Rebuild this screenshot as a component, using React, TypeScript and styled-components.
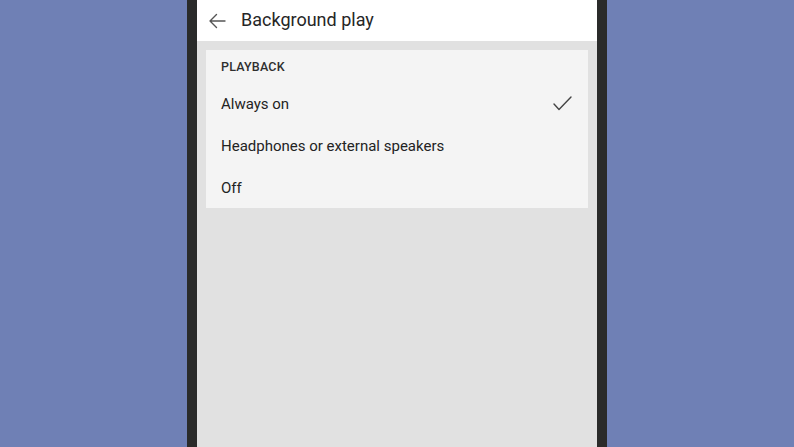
import styled, { createGlobalStyle } from "styled-components";

const GlobalStyle = createGlobalStyle`
  *, *::before, *::after {
    box-sizing: border-box;
  }
  html, body {
    margin: 0;
    padding: 0;
    height: 100%;
    background: #6f80b5;
    font-family: Roboto, "Noto Sans", sans-serif;
  }
  #root {
    height: 100%;
  }
`;

const Stage = styled.div`
  height: 100vh;
  display: flex;
  justify-content: center;
  overflow: hidden;
`;

const Phone = styled.div`
  width: 420px;
  height: 100%;
  border-left: 10px solid #2a2b2a;
  border-right: 10px solid #2a2b2a;
  background: #e1e1e1;
  display: flex;
  flex-direction: column;
`;

const AppBar = styled.header`
  height: 41px;
  background: #ffffff;
  display: flex;
  align-items: center;
  padding-left: 10px;
  gap: 14px;
  flex-shrink: 0;
`;

const BackButton = styled.button`
  width: 20px;
  height: 20px;
  padding: 0;
  border: none;
  background: none;
  display: flex;
  align-items: center;
  justify-content: center;
  color: #555;
`;

const Title = styled.h1`
  margin: 0;
  font-size: 18px;
  font-weight: 400;
  color: #262626;
  padding-bottom: 2px;
`;

const Card = styled.section`
  margin: 9px 9px 0;
  background: #f4f4f4;
  display: flex;
  flex-direction: column;
`;

const SectionLabel = styled.div`
  height: 32px;
  display: flex;
  align-items: center;
  padding-left: 15px;
  font-size: 12.5px;
  font-weight: 500;
  color: #2e2e2e;
  letter-spacing: 0.2px;
`;

const Option = styled.div`
  height: 42px;
  display: flex;
  align-items: center;
  justify-content: space-between;
  padding: 1px 16px 0 15px;
  font-size: 15px;
  color: #232323;
`;

function BackArrow() {
  return (
    <svg width="18" height="18" viewBox="0 0 18 18" fill="none">
      <path
        d="M17 9H2M8.5 2.5L2 9l6.5 6.5"
        stroke="#555"
        strokeWidth="1.4"
        strokeLinecap="round"
        strokeLinejoin="round"
      />
    </svg>
  );
}

function Check() {
  return (
    <svg width="19" height="15" viewBox="0 0 19 15" fill="none">
      <path
        d="M1 8l5 5.5L18 1"
        stroke="#444"
        strokeWidth="1.4"
        strokeLinecap="round"
        strokeLinejoin="round"
      />
    </svg>
  );
}

const options = ["Always on", "Headphones or external speakers", "Off"];

export default function App() {
  const selected = "Always on";

  return (
    <>
      <GlobalStyle />
      <Stage>
        <Phone>
          <AppBar>
            <BackButton aria-label="Back">
              <BackArrow />
            </BackButton>
            <Title>Background play</Title>
          </AppBar>
          <Card>
            <SectionLabel>PLAYBACK</SectionLabel>
            {options.map((opt) => (
              <Option key={opt}>
                <span>{opt}</span>
                {opt === selected && <Check />}
              </Option>
            ))}
          </Card>
        </Phone>
      </Stage>
    </>
  );
}
